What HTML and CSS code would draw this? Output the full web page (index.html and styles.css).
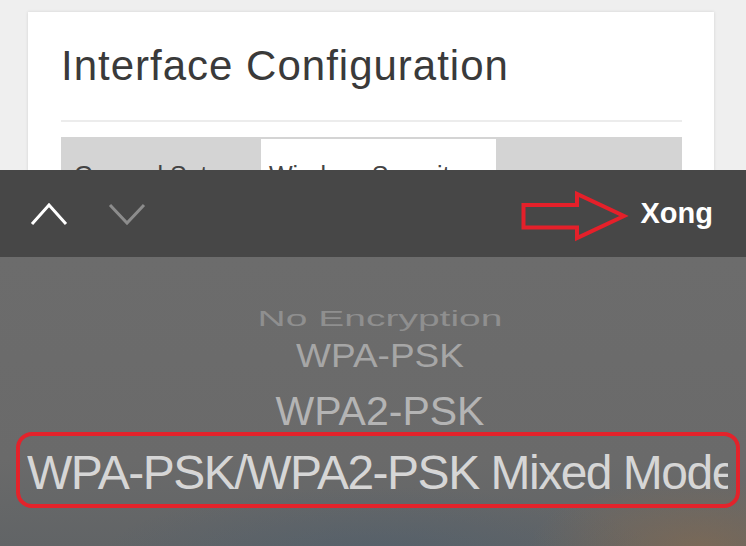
FILE: index.html
```html
<!DOCTYPE html>
<html lang="en">
<head>
    <meta charset="UTF-8">
    <meta name="viewport" content="width=device-width, initial-scale=1.0">
    <title>Interface Configuration</title>
    <link rel="stylesheet" href="styles.css">
</head>
<body>
    <div class="card">
        <h1 class="title">Interface Configuration</h1>
        <div class="rule"></div>
        <div class="tabs">
            <div class="tab">General Setup</div>
            <div class="tab active">Wireless Security</div>
            <div class="tab"></div>
        </div>
    </div>

    <div class="picker">
        <div class="toolbar">
            <svg class="chev" width="38" height="28" viewBox="0 0 38 28">
                <polyline points="2,24 19,5 36,24" fill="none" stroke="#fff" stroke-width="3"/>
            </svg>
            <svg class="chev down" width="38" height="28" viewBox="0 0 38 28">
                <polyline points="2,5 19,23 36,5" fill="none" stroke="#8c8c8c" stroke-width="3"/>
            </svg>
            <svg class="arrow" width="110" height="54" viewBox="0 0 110 54">
                <polygon points="4.5,17 58,17 58,6 105,28 58,50 58,39.5 4.5,39.5" fill="none" stroke="#e5202a" stroke-width="4"/>
            </svg>
            <span class="done">Xong</span>
        </div>
        <div class="wheel">
            <div class="item far">No Encryption</div>
            <div class="item near">WPA-PSK</div>
            <div class="item close">WPA2-PSK</div>
            <div class="selected">
                <span>WPA-PSK/WPA2-PSK Mixed Mode</span>
            </div>
        </div>
    </div>
</body>
</html>
```

FILE: styles.css
```css
body {
    font-family: "Liberation Sans", Arial, sans-serif;
    margin: 0;
    padding: 0;
    background-color: #efefef;
    color: #3a3a3a;
    overflow: hidden;
    height: 546px;
}
.card {
    box-sizing: border-box;
    margin: 12px 32px 0 28px;
    padding: 29px 32px 0 33px;
    background: #fff;
    height: 534px;
    box-shadow: 0 0 3px rgba(0, 0, 0, 0.12);
}
.title {
    margin: 0;
    font-size: 42px;
    line-height: 50px;
    font-weight: normal;
    letter-spacing: 1px;
}
.rule {
    margin-top: 29px;
    height: 2px;
    background: #ececec;
}
.tabs {
    margin-top: 15px;
    display: grid;
    grid-template-columns: 200px 235px 1fr;
    background: #d4d4d4;
    height: 70px;
}
.tab {
    padding: 24px 12px 0 13px;
    font-size: 25px;
    color: #444;
    white-space: nowrap;
    overflow: hidden;
}
.tab.active {
    background: #fff;
    margin-top: 2px;
    padding-top: 22px;
    padding-left: 8px;
}

/* picker sheet over the page */
.picker {
    position: fixed;
    top: 170px;
    left: 0;
    right: 0;
    bottom: 0;
    display: flex;
    flex-direction: column;
}
.toolbar {
    height: 87px;
    background: #474747;
    display: flex;
    align-items: center;
    padding: 0 33px 0 30px;
}
.chev {
    display: block;
}
.chev.down {
    margin-left: 40px;
}
.arrow {
    display: block;
    margin-left: auto;
    margin-right: 12px;
    margin-top: 2px;
}
.done {
    color: #fff;
    font-weight: bold;
    font-size: 29px;
}
.wheel {
    flex: 1;
    overflow: hidden;
    background:
        radial-gradient(ellipse 170px 70px at 700px 290px, rgba(150, 110, 70, 0.45), transparent),
        radial-gradient(ellipse 280px 70px at 380px 300px, rgba(70, 92, 112, 0.45), transparent),
        linear-gradient(#6c6c6c, #6a6a6a 70%, #616466);
    display: flex;
    flex-direction: column;
    align-items: center;
}
.item {
    white-space: nowrap;
    text-align: center;
    margin-left: 14px;
}
.far {
    margin-top: 45px;
    height: 34px;
    line-height: 34px;
    font-size: 39px;
    color: #8f8f8f;
    transform: scaleY(0.56);
}
.near {
    margin-top: 1px;
    height: 38px;
    line-height: 38px;
    font-size: 37px;
    color: #a6a6a6;
    transform: scaleY(0.92);
}
.close {
    margin-top: 15px;
    height: 42px;
    line-height: 42px;
    font-size: 41px;
    color: #b4b4b4;
}
.selected {
    align-self: stretch;
    box-sizing: border-box;
    height: 76px;
    margin: 0 6px 0 16px;
    padding: 6px 8px 0 7px;
    border: 4px solid #e3232b;
    border-radius: 16px;
}
.selected span {
    display: block;
    overflow: hidden;
    white-space: nowrap;
    font-size: 48px;
    line-height: 62px;
    letter-spacing: -1.5px;
    color: #d6d6d6;
}
```
